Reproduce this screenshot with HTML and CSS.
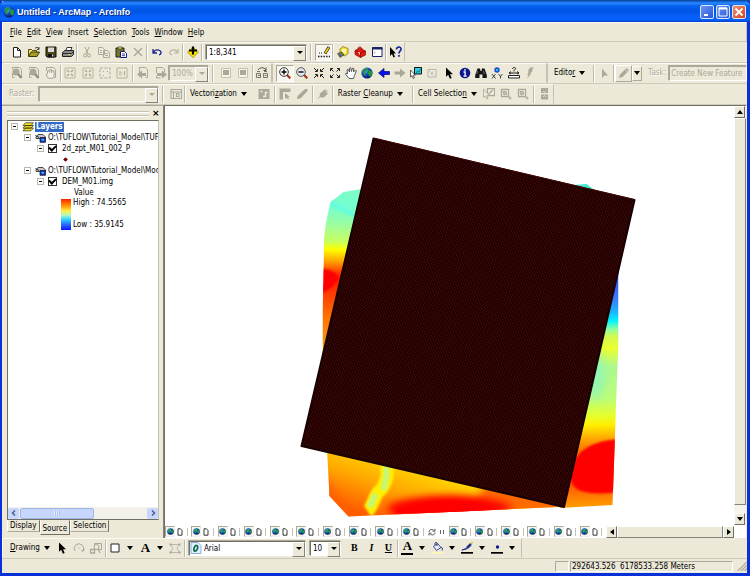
FILE: index.html
```html
<!DOCTYPE html>
<html lang="en">
<head>
<meta charset="utf-8">
<title>Untitled - ArcMap - ArcInfo</title>
<link rel="stylesheet" href="styles.css">
</head>
<body>
<svg class="sprite" aria-hidden="true">
  <defs>
    <radialGradient id="ball" cx=".35" cy=".3" r=".8"><stop offset="0" stop-color="#7fd0ff"/><stop offset=".4" stop-color="#1a4fd0"/><stop offset="1" stop-color="#000a50"/></radialGradient>
  </defs>
  <symbol id="globe" viewBox="0 0 12 12"><circle cx="6" cy="6" r="5.6" fill="url(#ball)"/><path d="M2 3 5 1 7 2 6 4 4 5 5 7 4 9 2 7zM8 3l3 1v4L9 10 7 7z" fill="#1f9a35"/></symbol>
  <symbol id="new" viewBox="0 0 12 12"><path d="M2.500 1.500h4l3 3v6.500h-7zM6.500 1.500v3h3" fill="#fff" stroke="#222"/></symbol>
  <symbol id="open" viewBox="0 0 12 12"><path d="M.5 10V3.500h3l1 1h4V6" fill="#f3e56b" stroke="#4b4a12"/><path d="M.5 10.500 3 6h8.500L9 10.500z" fill="#a89d22" stroke="#3c3a08"/><path d="M7 2.500c1-1.500 3-1.500 4 .5M11 1v2.500H8.800" fill="none" stroke="#222" stroke-width=".8"/></symbol>
  <symbol id="save" viewBox="0 0 12 12"><path d="M1 1h10v10H2L1 10z" fill="#4c4a14" stroke="#111"/><path d="M3 1.500h6V6H3z" fill="#d9d9d9"/><path d="M3 8h6v3.500H3z" fill="#111"/><path d="M7 8.500h1.300v2H7z" fill="#eee"/></symbol>
  <symbol id="print" viewBox="0 0 12 12"><path d="M3.500 5 5 1.500h5L8.500 5" fill="#fff" stroke="#333"/><path d="M.500 6.500 3 4.500h8.500v4L9.500 10.500h-9z" fill="#8d8d8d" stroke="#222"/><path d="M1 7.500h8.500M9.500 7.500l2-2" stroke="#333"/><path d="M6 8.500h2" stroke="#e6d836"/></symbol>
  <symbol id="cut" viewBox="0 0 12 12"><path d="M4 1l3 7M8 1 5 8" fill="none" stroke="#aca899"/><circle cx="4" cy="9.500" r="1.500" fill="none" stroke="#aca899"/><circle cx="8" cy="9.500" r="1.500" fill="none" stroke="#aca899"/></symbol>
  <symbol id="copy" viewBox="0 0 12 12"><path d="M.500 1.500h4l2 2v5h-6z M5.500 4.500h4l2 2v5h-6z M7 7.500h3M7 9.500h3M2 4.500h2M2 6.500h2" fill="#efecdf" stroke="#aca899"/></symbol>
  <symbol id="paste" viewBox="0 0 12 12"><path d="M1 2h8v9H1z" fill="#77742a" stroke="#222"/><path d="M3 1h4v2H3z" fill="#e8df70" stroke="#222" stroke-width=".6"/><path d="M5.500 5.500h4l2 2v4h-6z" fill="#fff" stroke="#14187c"/><path d="M7 8h3M7 9.700h3" stroke="#14187c" stroke-width=".8"/></symbol>
  <symbol id="del" viewBox="0 0 12 12"><path d="M2 2l8 8M10 2 2 10" stroke="#aca899" stroke-width="1.400"/></symbol>
  <symbol id="undo" viewBox="0 0 12 12"><path d="M2 3v4h4M2.500 6.500C4 3 9 3 10 6c.4 1.500-.5 2.500-2 3" fill="none" stroke="#1c2390" stroke-width="1.300"/></symbol>
  <symbol id="redo" viewBox="0 0 12 12"><path d="M10 3v4H6M9.500 6.500C8 3 3 3 2 6c-.4 1.500.5 2.500 2 3" fill="none" stroke="#bbb7a7" stroke-width="1.200"/></symbol>
  <symbol id="add" viewBox="0 0 12 12"><path d="M.500 6 6 1l5.500 5L6 11.700z" fill="#ffe600" stroke="#8a7a00" stroke-width=".7"/><path d="M6 .5v8M2 4.500h8" stroke="#000" stroke-width="2.200"/></symbol>
  <symbol id="sketch" viewBox="0 0 12 12"><path d="M0 10.500h12" stroke="#222" stroke-width="1.500" stroke-dasharray="1.500 1.200"/><path d="M1 7h4" stroke="#222" stroke-dasharray="1 1"/><path d="M7 7.500 11 1" stroke="#222" stroke-width="3"/><path d="M7.300 7 10.800 1.500" stroke="#ffd500" stroke-width="1.600"/></symbol>
  <symbol id="catalog" viewBox="0 0 12 12"><path d="M3 3 6 .5l5 2v5L8 10 3 8z" fill="#f3e12f" stroke="#7a6a10" stroke-width=".7"/><path d="M5 3h4v4H5z" fill="#fff8b0"/><path d="M.500 7.500 5 6l2 3-4 2.500z" fill="#8a8420" stroke="#333" stroke-width=".6"/><circle cx="3.500" cy="9" r="1.200" fill="#3560d0"/></symbol>
  <symbol id="toolbox" viewBox="0 0 12 12"><path d="M1 4.500 6 2l5.500 3v4L6.500 11.500 1 8.500z" fill="#e01c10" stroke="#8a0a05" stroke-width=".7"/><path d="M1 4.500 6.500 7 11.500 5M6.500 7v4.500" fill="none" stroke="#900" stroke-width=".8"/><path d="M4 3c0-3 4-2.500 4 .5" fill="none" stroke="#a00"/><path d="M4 6.500h1.500v2" stroke="#fff" fill="none" stroke-width=".8"/></symbol>
  <symbol id="cmd" viewBox="0 0 12 12"><path d="M1.500 1.500h9.500v9H1.500z" fill="#fff" stroke="#1b2367"/><path d="M1 2.500h10.500" stroke="#1b2367" stroke-width="2"/><path d="M3 5.500l1 1-1 1" stroke="#444" fill="none" stroke-width=".6"/></symbol>
  <symbol id="help" viewBox="0 0 12 12"><path d="M0 1v9l2-2 1.500 3.500 1.500-.7L3.500 7.500H6z" fill="#000"/><path d="M6.500 3.500C6.500 0 11.500.5 11 3.500 10.800 5 9 5 9 7.500M9 9v1.800" fill="none" stroke="#13209a" stroke-width="1.600"/></symbol>
  <symbol id="gpage" viewBox="0 0 12 12"><path d="M1.500 2.500V.5h7l2 2v8h-2M1.500 6v4.500h2" fill="none" stroke="#aca899"/><circle cx="5" cy="5" r="3.500" fill="#aca899"/><path d="m7 7 3.500 4" stroke="#8f8b7d" stroke-width="2"/></symbol>
  <symbol id="gpan" viewBox="0 0 12 12"><path d="M1.500 4V.5h7l2 2v8h-2" fill="none" stroke="#aca899"/><path d="M3 11 1 7.500 2.500 7 2.500 4l1.500-.5.500 2 .5-3 1.500.2V6l1-2.500L9 4v5l-1.500 2.500z" fill="#f4f2e8" stroke="#aca899"/></symbol>
  <symbol id="gfix" viewBox="0 0 12 12"><path d="M1 1h10v10H1z" fill="none" stroke="#bbb7a8"/><path d="M3 3l2 2M9 3 7 5M3 9l2-2M9 9 7 7" stroke="#aca899" stroke-width="1.500"/></symbol>
  <symbol id="gwhole" viewBox="0 0 12 12"><path d="M1 1h10v10H1z" fill="none" stroke="#aca899" stroke-dasharray="3 1.500"/><path d="M4 4h1v1H4zM8 4h1v1H8zM4 8h1v1H4z" fill="#aca899"/></symbol>
  <symbol id="gone" viewBox="0 0 12 12"><path d="M1 1h10v10H1z" fill="none" stroke="#b5b1a2"/><path d="M4 4v4.500M8.500 4v4.500M6 5v.8M6 7.500v.8" stroke="#aca899"/></symbol>
  <symbol id="gback" viewBox="0 0 12 12"><path d="M2.500 6V.5h6l2 2v8h-2" fill="none" stroke="#aca899"/><path d="M0 7.500 5 3.500V6h4v3H5v2.500z" fill="#aca899"/></symbol>
  <symbol id="gfwd" viewBox="0 0 12 12"><path d="M1.500 6V.5h6l2 2V5M1.500 9v2h4" fill="none" stroke="#aca899"/><path d="M12 7.500 7 3.500V6H2v3h5v2.500z" fill="#aca899"/></symbol>
  <symbol id="gframe" viewBox="0 0 12 12"><path d="M1.500 1.500h9v9h-9z" fill="#f6f4ea" stroke="#c4c0b2"/><path d="M3 3h6v5H3z" fill="#aca899"/></symbol>
  <symbol id="ddp" viewBox="0 0 12 12"><path d="M.500 6.500h4v4h-4zM7.500 6.500h4v4h-4zM1 4.500h3M8 4.500h3" fill="none" stroke="#77756b"/><path d="M2 8.500h2M8.500 8.500h2" stroke="#77756b"/><path d="M2 3c2-3 6-3 8 0M10 .5V3.500H7.500" fill="none" stroke="#444" stroke-width=".9"/></symbol>
  <symbol id="zin" viewBox="0 0 12 12"><path d="m8 8 3.300 3.300" stroke="#a03018" stroke-width="2.200"/><circle cx="5" cy="5" r="4.300" fill="#fff" stroke="#333"/><path d="M2.500 5h5M5 2.500v5" stroke="#000" stroke-width="1.400"/></symbol>
  <symbol id="zout" viewBox="0 0 12 12"><path d="m8 8 3.300 3.300" stroke="#a03018" stroke-width="2.200"/><circle cx="5" cy="5" r="4.300" fill="#e4e8f0" stroke="#555"/><path d="M2.500 5h5" stroke="#000" stroke-width="1.400"/></symbol>
  <symbol id="fixin" viewBox="0 0 12 12"><path d="M1 1l3 3M11 1 8 4M1 11l3-3M11 11 8 8M4.500 2v2.500H2M7.500 2v2.500H10M4.500 10V7.500H2M7.500 10V7.500H10" fill="none" stroke="#222"/></symbol>
  <symbol id="fixout" viewBox="0 0 12 12"><path d="M2 2l2.500 2.500M10 2 7.500 4.500M2 10l2.500-2.500M10 10 7.500 7.500M4 1.500H1.500V4M8 1.500h2.500V4M4 10.500H1.500V8M8 10.500h2.500V8" fill="none" stroke="#222"/></symbol>
  <symbol id="hand" viewBox="0 0 12 12"><path d="M4 11.500 .8 7.500 1 6l1.500.8L2 3l1-.8L4.500 5 4.500 1.200 5.800.8 6.500 4.500 7.500 1.200 8.800 1.500 8.500 5 10.500 3l.8 1L9.500 8.500 8.500 11.500z" fill="#fff" stroke="#333" stroke-width=".8"/></symbol>
  <symbol id="left" viewBox="0 0 12 12"><path d="M.500 6 6 1.500V4.500h5.500v3H6v3z" fill="#0a10ee" stroke="#000a60" stroke-width=".7"/></symbol>
  <symbol id="right" viewBox="0 0 12 12"><path d="M11.500 6 6 1.500V4.500H.500v3H6v3z" fill="#aca899"/></symbol>
  <symbol id="selfeat" viewBox="0 0 12 12"><path d="M4.500 .5h7v6.500h-7z" fill="#25d7e8" stroke="#111"/><path d="M6 6.500 7.500 3.500l1.500 2L10.500 2" fill="none" stroke="#157a90"/><path d="M.500 3v7l1.500-1.300L3.200 11.500l1.200-.6L3.300 8.200h2z" fill="#fff" stroke="#222" stroke-width=".7"/></symbol>
  <symbol id="gclear" viewBox="0 0 12 12"><path d="M2 2.500h8v7.500H2z" fill="#f0eee2" stroke="#b8b4a6"/><path d="M3 3.500l5 5M7 4.500 5 8" stroke="#b8b4a6"/></symbol>
  <symbol id="arrow" viewBox="0 0 12 12"><path d="M3 .5v9.300l2.200-2 1.700 3.900 1.800-.8-1.700-3.600H10z" fill="#000"/></symbol>
  <symbol id="info" viewBox="0 0 12 12"><circle cx="6" cy="6" r="5.300" fill="#0d168c"/><path d="M6 2v1.800M4.500 5h1.600v4M4.500 9.200h3.200" stroke="#fff" stroke-width="1.300" fill="none"/></symbol>
  <symbol id="find" viewBox="0 0 12 12"><path d="M2.500 1.500H5L5.500 4h1L7 1.500h2.500L11.800 8v3H7.500V7.500h-3V11H.2V8z" fill="#151515"/><path d="M2.500 4 1.800 7M8.500 4l.8 3" stroke="#999" stroke-width=".7"/></symbol>
  <symbol id="xy" viewBox="0 0 12 12"><circle cx="6" cy="3" r="2.700" fill="#1947d8"/><circle cx="6" cy="3" r="1.200" fill="#23c4e8"/><path d="m1 7 3.500 4.500M4.500 7 1 11.500M7.500 7l2 2.300L11.500 7M9.500 9v2.500" fill="none" stroke="#333" stroke-width=".9"/></symbol>
  <symbol id="measure" viewBox="0 0 12 12"><path d="M.500 8.500h11v2.500H.500z" fill="#fff" stroke="#222"/><path d="M1 6h10M3 4.500 1 6l2 1M9 4.500 11 6 9 7" fill="none" stroke="#222"/><path d="M4.500 2C4.500 0 8 0 7.500 2L6 3.500v1" fill="none" stroke="#222"/></symbol>
  <symbol id="bolt" viewBox="0 0 12 12"><path d="M6 .5h4L7.500 3.500H9L6 6.500h1.500L3 11.500 4.500 7.500H3L5 4.500H3.500z" fill="#aca899"/></symbol>
  <symbol id="play" viewBox="0 0 12 12"><path d="M3 1.500v9.500l2.500-2.500H9z" fill="#aca899"/></symbol>
  <symbol id="pencil" viewBox="0 0 12 12"><path d="M1 11 2 7.500 8.500 1l2.500 2.500L4.500 10z" fill="#aca899"/><path d="m7 2.500 2.500 2.500" stroke="#ece9d8" stroke-width=".8"/></symbol>
  <symbol id="gtable" viewBox="0 0 12 12"><path d="M1 1.500h10.500v9H1zM1 4h10.500M3.500 4v6.500M6.500 5.500H9v3H6.500z" fill="none" stroke="#aca899" stroke-width="1.100"/></symbol>
  <symbol id="gras" viewBox="0 0 12 12"><path d="M.500 1h11v10H.500z" fill="#aca899"/><path d="M2.500 3.500h2M5 8.500h2.500v-4h2" fill="none" stroke="#efecdf" stroke-width="1.500"/></symbol>
  <symbol id="gcorner" viewBox="0 0 12 12"><path d="M.500.5h11V4H4v7.500H.500z" fill="#aca899"/><path d="M6 5v6l1.500-1.500L9 11.500l1-.5-1-2h2z" fill="#aca899"/></symbol>
  <symbol id="gbrush" viewBox="0 0 12 12"><path d="M1 11 1.500 8 9 1h2.500v2L4.500 10.500z" fill="#aca899"/></symbol>
  <symbol id="gplug" viewBox="0 0 12 12"><path d="M0 11 3 8 2.500 6 6 3 9 .5 8 3l3-1L9 5h2.500L8 8.500 5.500 10 4 9z" fill="#aca899"/></symbol>
  <symbol id="gcell" viewBox="0 0 12 12"><path d="M1.500 1.500h7v7h-7z" fill="#f3f1e6" stroke="#aca899" stroke-width="1.300"/><path d="M3 3.500 6 3.500 7 6 4 7zM10 8.500v3M8.500 10h3" stroke="#aca899" fill="#c4c0b2"/></symbol>
  <symbol id="gcellsel" viewBox="0 0 12 12"><path d="M4.500.5h7v7h-7z" fill="#f3f1e6" stroke="#aca899" stroke-width="1.300"/><path d="M6 6 9.500 2" stroke="#aca899" stroke-width="1.500"/><path d="M.500 1v8.500L2.500 8l1.200 3 1.300-.5L4 7.500h2.500z" fill="#ece9d8" stroke="#aca899" stroke-width=".8"/></symbol>
  <symbol id="gstack" viewBox="0 0 12 12"><path d="M3 0h7v5H3zM3 6.500h7v5H3z" fill="#aca899"/><path d="M5 3l1.500 1.500L8 3M5 9l1.500-1.500L8 9" stroke="#efecdf" fill="none" stroke-width=".8"/></symbol>
  <symbol id="grot" viewBox="0 0 12 12"><path d="M2 9A4.700 4.700 0 1 1 10 9M11.500 7 10 9.500 8 8" fill="none" stroke="#aca899"/><path d="M5.500 5.500h1v1h-1z" fill="#aca899"/></symbol>
  <symbol id="gzsel" viewBox="0 0 12 12"><path d="M4.500 1.500h7v6h-7z" fill="none" stroke="#aca899"/><circle cx="6.500" cy="5" r="2.500" fill="#ece9d8" stroke="#aca899"/><path d="M.500 7.500h4v3.500h-4zM8 7l2 4" fill="none" stroke="#aca899" stroke-width="1.300"/></symbol>
  <symbol id="rect" viewBox="0 0 12 12"><path d="M2 2h8v8H2z" fill="#fff" stroke="#222"/></symbol>
  <symbol id="gpoly" viewBox="0 0 12 12"><path d="M1.500 10.500 4 6.500 1.500 2.500h9L8 6l2.500 4.500z" fill="none" stroke="#bbb7a8"/><path d="M.500 1.500h2v2h-2zM9.500 1.500h2v2h-2zM.500 9.500h2v2h-2zM9.500 9.500h2v2h-2z" fill="#aca899"/></symbol>
  <symbol id="bucket" viewBox="0 0 12 12"><path d="M0 10h12v1.500H0z" fill="#fdf9b0"/><path d="m2.500 4.500 4-3 3.500 4-4.500 3z" fill="#e6ebfa" stroke="#2a3480" stroke-width=".9"/><path d="M4 3V1.500c0-1.500 2-1.500 2 0V4M10 5c2 1 1.500 3 1 3.500" fill="none" stroke="#2a3480"/></symbol>
  <symbol id="linecol" viewBox="0 0 12 12"><path d="M0 10h12v1.700H0z" fill="#000"/><path d="M6 6 10 2" stroke="#23308c" stroke-width="2.500"/><path d="M10 2 11.500 0" stroke="#d8c530" stroke-width="1.500"/><path d="M1 8.500c1-2 3 0 5-2.500" fill="none" stroke="#23308c" stroke-width="1.300"/></symbol>
  <symbol id="dotcol" viewBox="0 0 12 12"><path d="M0 10h12v1.700H0z" fill="#000"/><circle cx="6.500" cy="5" r="1.700" fill="#101b96"/></symbol>
  <symbol id="page" viewBox="0 0 6 8"><path d="M1 .8h2.500L5 2.500v4.700H1z" fill="#fff" stroke="#222" stroke-width=".9"/></symbol>
  <symbol id="refresh" viewBox="0 0 8 8"><path d="M1 4c0-3 4-3 5-1.500M7 .8v2.400H4.500M7 4.500c0 3-4 3-5 1.200M1 7.500V5.200h2.500" fill="none" stroke="#444" stroke-width=".9"/></symbol>
  <symbol id="layers" viewBox="0 0 12 10"><path d="M1 8.800 3.500 6h8L9 8.800zM1 6.200 3.500 3.500h8L9 6.200zM1 3.600 3.500.8h8L9 3.600z" fill="#f5e432" stroke="#2d2a00" stroke-width=".7"/></symbol>
  <symbol id="source" viewBox="0 0 12 10"><path d="M1 4 3 1.500h5L10.500 4v1.500H1z" fill="#c9c9c9" stroke="#222" stroke-width=".8"/><path d="M.500 2.500 4 4.500" stroke="#222"/><path d="M5 4.500h5.500v4.800H5z" fill="#1a2fc0" stroke="#111" stroke-width=".7"/><path d="M6.500 6h2.500v1.500H6.500z" fill="#3fd0e8"/></symbol>
  <symbol id="fontic" viewBox="0 0 12 12"><path d="M1 .5h7L11 3.500V11.500H1z" fill="#e4f0ff" stroke="#6f9bd8" stroke-width=".8"/><ellipse cx="5.800" cy="6.300" rx="1.700" ry="3" transform="rotate(18 5.800 6.300)" fill="none" stroke="#0a6a50" stroke-width="1.700"/></symbol>
</svg>

<div class="window">
  <header class="titlebar">
    <svg class="i"><use href="#globe"/></svg>
    <h1>Untitled - ArcMap - ArcInfo</h1>
    <button class="wb" aria-label="Minimize"><svg viewBox="0 0 12 12"><path d="M3 9h4" stroke="#fff" stroke-width="2"/></svg></button>
    <button class="wb" aria-label="Maximize"><svg viewBox="0 0 12 12"><path d="M2 2h8v8H2z" fill="none" stroke="#fff"/><path d="M2 2.500h8" stroke="#fff" stroke-width="2"/></svg></button>
    <button class="wb close" aria-label="Close"><svg viewBox="0 0 12 12"><path d="m2.500 2.500 7 7M9.500 2.500l-7 7" stroke="#fff" stroke-width="1.800"/></svg></button>
  </header>

  <nav class="menu bar">
    <button><u>F</u>ile</button><button><u>E</u>dit</button><button><u>V</u>iew</button><button><u>I</u>nsert</button><button><u>S</u>election</button><button><u>T</u>ools</button><button><u>W</u>indow</button><button><u>H</u>elp</button>
  </nav>

  <div class="row">
    <div class="bar std">
      <button class="t" aria-label="New"><svg class="i"><use href="#new"/></svg></button><button class="t" aria-label="Open"><svg class="i"><use href="#open"/></svg></button><button class="t" aria-label="Save"><svg class="i"><use href="#save"/></svg></button><button class="t" aria-label="Print"><svg class="i"><use href="#print"/></svg></button>
      <i class="sep"></i>
      <button class="t" aria-label="Cut"><svg class="i"><use href="#cut"/></svg></button><button class="t" aria-label="Copy"><svg class="i"><use href="#copy"/></svg></button><button class="t" aria-label="Paste"><svg class="i"><use href="#paste"/></svg></button><button class="t" aria-label="Delete"><svg class="i"><use href="#del"/></svg></button>
      <i class="sep"></i>
      <button class="t" aria-label="Undo"><svg class="i"><use href="#undo"/></svg></button><button class="t" aria-label="Redo"><svg class="i"><use href="#redo"/></svg></button>
      <i class="sep"></i>
      <button class="t" aria-label="Add Data"><svg class="i"><use href="#add"/></svg></button>
      <i class="sep"></i>
      <div class="combo scale"><select aria-label="Map scale"><option>1:8,341</option></select></div>
      <i class="sep wide"></i>
      <button class="t on" aria-label="Editor Toolbar"><svg class="i"><use href="#sketch"/></svg></button>
      <i class="sep"></i>
      <button class="t" aria-label="ArcCatalog"><svg class="i"><use href="#catalog"/></svg></button><button class="t" aria-label="ArcToolbox"><svg class="i"><use href="#toolbox"/></svg></button><button class="t" aria-label="Command Line"><svg class="i"><use href="#cmd"/></svg></button>
      <i class="sep"></i>
      <button class="t" aria-label="What's This?"><svg class="i"><use href="#help"/></svg></button>
    </div>
  </div>

  <div class="row">
    <div class="bar layout">
      <button class="t" disabled aria-label="Zoom In Layout"><svg class="i"><use href="#gpage"/></svg></button><button class="t" disabled aria-label="Zoom Out Layout"><svg class="i"><use href="#gpage"/></svg></button><button class="t" disabled aria-label="Pan Layout"><svg class="i"><use href="#gpan"/></svg></button>
      <i class="sep"></i>
      <button class="t" disabled aria-label="Fixed Zoom In"><svg class="i"><use href="#gfix"/></svg></button><button class="t" disabled aria-label="Fixed Zoom Out"><svg class="i"><use href="#gfix"/></svg></button><button class="t" disabled aria-label="Zoom Whole Page"><svg class="i"><use href="#gwhole"/></svg></button><button class="t" disabled aria-label="Zoom to 100%"><svg class="i"><use href="#gone"/></svg></button>
      <i class="sep mid"></i>
      <button class="t" disabled aria-label="Back Extent"><svg class="i"><use href="#gback"/></svg></button><button class="t" disabled aria-label="Forward Extent"><svg class="i"><use href="#gfwd"/></svg></button>
      <div class="combo zoom off"><select disabled aria-label="Layout zoom"><option>100%</option></select></div>
      <i class="sep wide"></i>
      <button class="t" disabled aria-label="Toggle Draft"><svg class="i"><use href="#gframe"/></svg></button><button class="t" disabled aria-label="Focus Data Frame"><svg class="i"><use href="#gframe"/></svg></button>
      <i class="sep"></i>
      <button class="t" aria-label="Data Driven Pages"><svg class="i"><use href="#ddp"/></svg></button>
    </div>
    <div class="bar tools">
      <button class="t on" aria-label="Zoom In"><svg class="i"><use href="#zin"/></svg></button><button class="t" aria-label="Zoom Out"><svg class="i"><use href="#zout"/></svg></button><button class="t" aria-label="Fixed Zoom In"><svg class="i"><use href="#fixin"/></svg></button><button class="t" aria-label="Fixed Zoom Out"><svg class="i"><use href="#fixout"/></svg></button><button class="t" aria-label="Pan"><svg class="i"><use href="#hand"/></svg></button><button class="t" aria-label="Full Extent"><svg class="i"><use href="#globe"/></svg></button><button class="t" aria-label="Back"><svg class="i"><use href="#left"/></svg></button><button class="t" disabled aria-label="Forward"><svg class="i"><use href="#right"/></svg></button><button class="t" aria-label="Select Features"><svg class="i"><use href="#selfeat"/></svg></button><button class="t" disabled aria-label="Clear Selection"><svg class="i"><use href="#gclear"/></svg></button><button class="t" aria-label="Select Elements"><svg class="i"><use href="#arrow"/></svg></button><button class="t" aria-label="Identify"><svg class="i"><use href="#info"/></svg></button><button class="t" aria-label="Find"><svg class="i"><use href="#find"/></svg></button><button class="t" aria-label="Go To XY"><svg class="i"><use href="#xy"/></svg></button><button class="t" aria-label="Measure"><svg class="i"><use href="#measure"/></svg></button><button class="t" disabled aria-label="Hyperlink"><svg class="i"><use href="#bolt"/></svg></button>
    </div>
    <div class="bar editor">
      <button class="text"><span>Edito<u>r</u></span><b class="tri"></b></button>
      <i class="sep mid"></i>
      <button class="t" disabled aria-label="Edit Tool"><svg class="i"><use href="#play"/></svg></button>
      <i class="sep"></i>
      <button class="t raised" disabled aria-label="Sketch Tool"><svg class="i"><use href="#pencil"/></svg></button><button class="drop raised" aria-label="Sketch tools"><b class="tri"></b></button>
      <label class="gray" for="task">Task:</label>
      <div class="combo task off"><select id="task" disabled><option>Create New Feature</option></select></div>
    </div>
  </div>

  <div class="row">
    <div class="bar raster">
      <label class="gray" for="rast">Raster:</label>
      <div class="combo rast off"><select id="rast" disabled><option></option></select></div>
      <i class="sep wide"></i>
      <button class="t" disabled aria-label="Raster Snapping"><svg class="i"><use href="#gtable"/></svg></button>
      <i class="sep"></i>
      <button class="text vec"><span>Vectori<u>z</u>ation</span><b class="tri"></b></button>
      <button class="t" disabled aria-label="Show Preview"><svg class="i"><use href="#gras"/></svg></button>
      <i class="sep mid"></i>
      <button class="t" disabled aria-label="Generate Features"><svg class="i"><use href="#gcorner"/></svg></button><button class="t" disabled aria-label="Trace"><svg class="i"><use href="#gbrush"/></svg></button>
      <i class="sep mid"></i>
      <button class="t" disabled aria-label="Shape Recognition"><svg class="i"><use href="#gplug"/></svg></button>
      <i class="sep"></i>
      <button class="text clean"><span>Raster <u>C</u>leanup</span><b class="tri"></b></button>
      <i class="sep"></i>
      <button class="text cell"><span>Cell Selectio<u>n</u></span><b class="tri"></b></button>
      <button class="t" disabled aria-label="Select Cells"><svg class="i"><use href="#gcellsel"/></svg></button><button class="t" disabled aria-label="Add Cells"><svg class="i"><use href="#gcell"/></svg></button><button class="t" disabled aria-label="Grow Cells"><svg class="i"><use href="#gcell"/></svg></button>
      <i class="sep mid"></i>
      <button class="t" disabled aria-label="Find Diameter"><svg class="i"><use href="#gstack"/></svg></button>
    </div>
  </div>

  <main>
    <aside>
      <div class="dock"><span></span><button aria-label="Close panel">×</button></div>
      <div class="toc">
        <ul class="tree">
          <li class="l0"><i class="exp"></i><svg class="ti"><use href="#layers"/></svg><strong>Layers</strong></li>
          <li class="l1"><i class="exp"></i><svg class="ti"><use href="#source"/></svg>O:\TUFLOW\Tutorial_Model\TUF</li>
          <li class="l2"><i class="exp"></i><input type="checkbox" id="a" checked><label for="a">2d_zpt_M01_002_P</label></li>
          <li class="sym"><i class="diamond"></i></li>
          <li class="l1"><i class="exp"></i><svg class="ti"><use href="#source"/></svg>O:\TUFLOW\Tutorial_Model\Mod</li>
          <li class="l2"><i class="exp"></i><input type="checkbox" id="b" checked><label for="b">DEM_M01.img</label></li>
          <li class="val">Value</li>
          <li class="ramp"><i></i><p><span>High : 74.5565</span><span>Low : 35.9145</span></p></li>
        </ul>
        <div class="hxp"><button aria-label="Scroll left"><svg viewBox="0 0 6 6"><path d="M4 .5 1.500 3 4 5.500" fill="none" stroke="#4d6185" stroke-width="1.500"/></svg></button><i></i><button aria-label="Scroll right"><svg viewBox="0 0 6 6"><path d="M2 .5 4.500 3 2 5.500" fill="none" stroke="#4d6185" stroke-width="1.500"/></svg></button></div>
      </div>
      <div class="tabs"><button>Display</button><button class="cur">Source</button><button>Selection</button></div>
    </aside>

    <section class="view">
      <div class="upper">
        <svg class="map" viewBox="166 106 568 419" role="img" aria-label="Elevation raster and grid points">
          <defs>
            <linearGradient id="gl" gradientUnits="userSpaceOnUse" x1="330" y1="190" x2="324" y2="350">
              <stop offset="0" stop-color="#7dfcc6"/><stop offset=".1" stop-color="#72ffd0"/><stop offset=".22" stop-color="#9ffd9c"/><stop offset=".32" stop-color="#c8ff60"/><stop offset=".37" stop-color="#fcff00"/><stop offset=".44" stop-color="#ffa800"/><stop offset=".5" stop-color="#ff4c00"/><stop offset=".54" stop-color="#ff1a00"/><stop offset=".66" stop-color="#ff4000"/><stop offset=".8" stop-color="#ff7400"/><stop offset="1" stop-color="#ff9a10"/>
            </linearGradient>
            <linearGradient id="gr" gradientUnits="userSpaceOnUse" x1="600" y1="270" x2="606" y2="508">
              <stop offset="0" stop-color="#2b3cff"/><stop offset=".12" stop-color="#3a78ff"/><stop offset=".18" stop-color="#18b8ff"/><stop offset=".215" stop-color="#00f4ff"/><stop offset=".25" stop-color="#90ffa0"/><stop offset=".28" stop-color="#d2f850"/><stop offset=".33" stop-color="#ecff30"/><stop offset=".41" stop-color="#acf890"/><stop offset=".54" stop-color="#bcfd78"/><stop offset=".61" stop-color="#e4ff30"/><stop offset=".65" stop-color="#fff000"/><stop offset=".7" stop-color="#ffb000"/><stop offset=".76" stop-color="#ff6c00"/><stop offset=".9" stop-color="#ff5800"/><stop offset="1" stop-color="#ffa200"/>
            </linearGradient>
            <linearGradient id="gb" gradientUnits="userSpaceOnUse" x1="385" y1="455" x2="365" y2="515">
              <stop offset="0" stop-color="#ffd800"/><stop offset=".45" stop-color="#ffa800"/><stop offset="1" stop-color="#ff5a00"/>
            </linearGradient>
            <filter id="b1" x="-50%" y="-50%" width="200%" height="200%"><feGaussianBlur stdDeviation="1.200"/></filter>
            <filter id="b4" x="-50%" y="-80%" width="200%" height="260%"><feGaussianBlur stdDeviation="4"/></filter>
            <clipPath id="cb"><path d="M327 440 330 496 349 516.500 613 504.500 613 440z"/></clipPath>
            <clipPath id="cr"><path d="M619 265 619 340 616.500 405 615 450 613 505 560 508 540 380z"/></clipPath>
            <clipPath id="cl"><path d="M400 180 362 189 344 192 331 202 327 220 324.500 238 324 280 323 310 323 420 400 420z"/></clipPath>
            <pattern id="pts" width="3" height="4" patternUnits="userSpaceOnUse" patternTransform="rotate(13.300)">
              <path d="M0 0h3v4H0z" fill="#0c0000"/><path d="M.3.500h1.200v1.400H.3zM1.800 2.500h1.100v1.400H1.800z" fill="#740a0a"/>
            </pattern>
          </defs>
          <g clip-path="url(#cl)"><path d="M320 180h80v240h-80z" fill="url(#gl)"/><path d="m331 203 25 13" stroke="#63fbe0" stroke-width="4" filter="url(#b1)"/><path d="M320 268q18 3 19 10-3 10-19 16z" fill="#f00" filter="url(#b1)"/></g>
          <path d="m574 185 13-1 8 6z" fill="#43e9cc"/>
          <g clip-path="url(#cb)">
            <path d="M320 430h250v90H320z" fill="url(#gb)"/>
            <path d="M500 455h70v60h-100z" fill="#ff6a00" filter="url(#b4)"/>
            <path d="M320 470 355 520H320z" fill="#ff6000" filter="url(#b4)"/>
            <ellipse cx="450" cy="508" rx="62" ry="11" fill="#f00" filter="url(#b4)"/><path d="M390 510q60-22 105-4l-10 8h-92z" fill="#f00" filter="url(#b4)"/><path d="M398 509q50-15 85-4l-6 8h-82z" fill="#f00" filter="url(#b1)"/>
            <path d="M387 460c1 14 2 18-5 29-8 5-8 18-14 22" fill="none" stroke="#fff000" stroke-width="13" filter="url(#b1)"/>
            <path d="M387 466v8l-3 16M376 494l-6 13" fill="none" stroke="#c4f77a" stroke-width="6" filter="url(#b1)"/>
          </g>
          <g clip-path="url(#cr)">
            <path d="M540 260h90v250h-90z" fill="url(#gr)"/>
            <ellipse cx="596" cy="375" rx="9" ry="24" fill="#8df5bc" filter="url(#b4)" opacity=".8"/>
            <path d="M571 480q-1-38 50-41v52q-20 5-40 0-8-4-10-11z" fill="#f00" filter="url(#b1)"/>
          </g>
          <path d="M374 138.500 635 200 564.500 507 302 446z" fill="url(#pts)" stroke="#180202" stroke-width="2" stroke-linejoin="round"/>
          <path d="M375 138.500 634 199.500" stroke="#4c0606"/>
        </svg>
        <div class="vs"><button aria-label="Scroll up"><b class="tri up"></b></button><i></i><button aria-label="Scroll down"><b class="tri"></b></button></div>
      </div>
      <div class="strip">
        <div class="pages" id="pages"></div>
        <button aria-label="Scroll left"><b class="tri lf"></b></button><i></i><button aria-label="Scroll right"><b class="tri rt"></b></button><em></em>
      </div>
    </section>
  </main>

  <div class="row">
    <div class="bar draw">
      <button class="text dr"><span><u>D</u>rawing</span><b class="tri"></b></button>
      <button class="t" aria-label="Select Elements"><svg class="i"><use href="#arrow"/></svg></button><button class="t" disabled aria-label="Rotate"><svg class="i"><use href="#grot"/></svg></button><button class="t" disabled aria-label="Zoom to Selected"><svg class="i"><use href="#gzsel"/></svg></button>
      <i class="sep"></i>
      <button class="t" aria-label="Rectangle"><svg class="i"><use href="#rect"/></svg></button><button class="drop" aria-label="Shapes"><b class="tri"></b></button>
      <button class="t glyph big" aria-label="New Text">A</button><button class="drop" aria-label="Text tools"><b class="tri"></b></button>
      <button class="t" disabled aria-label="Edit Vertices"><svg class="i"><use href="#gpoly"/></svg></button>
      <i class="sep"></i>
      <div class="combo font"><svg class="i"><use href="#fontic"/></svg><select aria-label="Font"><option>Arial</option></select></div>
      <div class="combo size"><select aria-label="Font size"><option>10</option></select></div>
      <button class="t glyph">B</button><button class="t glyph it">I</button><button class="t glyph un">U</button>
      <i class="sep"></i>
      <button class="t glyph col" aria-label="Font Color">A</button><button class="drop" aria-label="Font colors"><b class="tri"></b></button>
      <button class="t fc" aria-label="Fill Color"><svg class="i"><use href="#bucket"/></svg></button><button class="drop" aria-label="Fill colors"><b class="tri"></b></button>
      <button class="t fc" aria-label="Line Color"><svg class="i"><use href="#linecol"/></svg></button><button class="drop" aria-label="Line colors"><b class="tri"></b></button>
      <button class="t fc" aria-label="Marker Color"><svg class="i"><use href="#dotcol"/></svg></button><button class="drop" aria-label="Marker colors"><b class="tri"></b></button>
    </div>
  </div>
  <footer><span class="cellbox"></span><output>292643.526&nbsp; 6178533.258 Meters</output><svg viewBox="0 0 12 12"><path d="M1 12 12 1M5 12l7-7M9 12l3-3" stroke="#aca899" stroke-width="1.500"/></svg></footer>
</div>
<script src="script.js"></script>
</body>
</html>
```

FILE: script.js
```js
// Fills the view switcher strip: data/layout view pairs with the refresh and pause controls among them.
const pages = document.getElementById('pages');
const pair = '<div class="pair"><button class="data" aria-label="Data View"><svg><use href="#globe"/></svg></button><button class="lay" aria-label="Layout View"><svg><use href="#page"/></svg></button><i></i></div>';
const extra = '<div class="extra"><button aria-label="Refresh View"><svg><use href="#refresh"/></svg></button><button aria-label="Pause Drawing"><b></b></button></div>';
pages.innerHTML = pair.repeat(10) + extra + pair.repeat(6);
```

FILE: styles.css
```css
* { box-sizing: border-box; }
html, body { height: 100%; margin: 0; }
body {
  background: #0b4d9e;
  padding-top: 1px;
  font: 8px/10px "DejaVu Sans Condensed", "DejaVu Sans", sans-serif;
  color: #000;
  overflow: hidden;
}
button, select, input { font: inherit; color: inherit; margin: 0; padding: 0; border: 0; background: none; border-radius: 0; }
ul, p, h1 { margin: 0; padding: 0; }
li { list-style: none; }
u { text-underline-offset: 1px; }
.sprite { position: absolute; width: 0; height: 0; }
.window {
  height: 100%;
  display: flex;
  flex-direction: column;
  background: #ece9d8;
  border: solid #0831d9;
  border-width: 0 3px 3px 2px;
}
.i { width: 12px; height: 12px; flex: none; display: block; }

/* title bar */
.titlebar {
  flex: none;
  height: 21px;
  margin: 0 -3px 0 -2px;
  padding: 0 4px 0 3px;
  display: flex;
  align-items: center;
  gap: 2px;
  background: linear-gradient(#0a50c8, #2b8bff 2px, #0560ee 5px, #0054e3 10px, #0661fb 16px, #0660f8 19px, #003cc4);
  border-radius: 5px 5px 0 0;
}
.titlebar h1 { flex: 1; font: bold 9px/12px "Liberation Sans", sans-serif; color: #fff; text-shadow: 1px 1px #0a2a80; }
.wb { width: 14px; height: 14px; border: 1px solid #dce8ff; border-radius: 2px; background: linear-gradient(135deg, #6c95f4, #2458dc); display: grid; place-items: center; }
.wb svg { width: 12px; height: 12px; }
.wb.close { background: linear-gradient(135deg, #f0906c, #d8401c); }

/* toolbars */
.row { flex: none; display: flex; height: 21px; border-bottom: 1px solid #cfcbbb; overflow: hidden; }
.bar { display: flex; align-items: center; flex: none; padding-left: 5px; border: 1px solid; border-color: #fbfaf5 #c5c2b3 #ece9d8 #fbfaf5; }
.menu { height: 20px; gap: 5px; padding: 2px 0 0 7px; border-bottom-color: #cfcbbb; }
.t { width: 17px; height: 17px; flex: none; display: grid; place-items: center; }
.t.on { background: #f6f5ef; border: 1px solid; border-color: #aca899 #fff #fff #aca899; }
.raised { border: 1px solid; border-color: #fff #aca899 #aca899 #fff; }
.sep { width: 2px; height: 17px; flex: none; border-left: 1px solid #bdb9aa; border-right: 1px solid #fff; }
.sep.mid { margin: 0 1px; }
.sep.wide { margin: 0 3px; }
.text { display: flex; align-items: center; gap: 4px; padding: 0 4px; flex: none; }
.tri { width: 0; height: 0; border: solid transparent; border-width: 4px 3px 0; border-top-color: #000; }
.tri.up { border-width: 0 3px 4px; border-bottom-color: #000; }
.tri.lf { border-width: 3px 4px 3px 0; border-color: transparent #000; }
.tri.rt { border-width: 3px 0 3px 4px; border-color: transparent #000; }
.gray { color: #aca899; text-shadow: 1px 1px #fff; }
.drop { width: 10px; height: 15px; display: grid; place-items: center; flex: none; }

.combo { position: relative; height: 15px; flex: none; display: flex; align-items: center; background: #fff; border: 1px solid; border-color: #716f64 #fff #fff #716f64; box-shadow: -1px -1px #aca899; }
.combo select { appearance: none; flex: 1; min-width: 0; height: 13px; padding: 0 12px 0 2px; line-height: 13px; }
.combo::before { content: ""; position: absolute; right: 0; top: 0; width: 11px; height: 13px; background: #ece9d8; border: 1px solid; border-color: #fff #85827a #85827a #fff; pointer-events: none; }
.combo::after { content: ""; position: absolute; right: 3px; top: 5px; border: solid transparent; border-width: 3px 3px 0; border-top-color: #000; pointer-events: none; }
.combo.off { background: #ece9d8; border-color: #aca899 #fff #fff #aca899; color: #aca899; }
.combo.off::after { border-top-color: #aca899; }
.combo select:disabled { opacity: 1; color: #aca899; }
.scale { width: 101px; margin-left: 3px; }
.zoom { width: 40px; }
.layout { width: 270px; }
.layout .t { width: 16px; flex: 1 1 auto; }
.tools { width: 275px; padding: 0 8px 0 3px; border-left-color: #c5c2b3; }
.tools .t { flex: 1; }
.editor { flex: 1; min-width: 0; border-right: 0; padding-left: 2px; border-left-color: #c5c2b3; overflow: hidden; }
.editor .gray { margin: 0 3px 0 6px; }
.editor .text { padding-right: 7px; }
.task { flex: 1 0 75px; }
.task::before, .task::after { display: none; }
.task select { padding: 0 0 0 1px; }
.rast { width: 120px; margin-left: 4px; }
.raster .gray { width: 26px; }
.raster { padding-left: 6px; }
.vec, .clean { margin-right: 5px; }

/* main area */
main { flex: 1; min-height: 0; display: flex; }
aside { width: 162px; flex: none; display: flex; flex-direction: column; padding: 0 4px 3px 5px; border-right: 1px solid #85827a; border-top: 1px solid #aca899; }
.dock { height: 14px; display: flex; align-items: center; gap: 3px; }
.dock span { flex: 1; height: 5px; border: solid #c5c2b3; border-width: 1px 0; box-shadow: 0 1px #fff, inset 0 1px #fff; }
.dock button { width: 7px; font: bold 9px/9px "DejaVu Sans", sans-serif; }
.toc { flex: 1; min-height: 0; display: flex; flex-direction: column; background: #fff; border: 1px solid; border-color: #716f64 #c5c2b3 #716f64 #716f64; }
.tree { flex: 1; overflow: hidden; white-space: nowrap; }
.tree li { height: 11px; display: flex; align-items: center; }
.tree .ti { width: 12px; height: 10px; margin: 0 1px 0 4px; flex: none; }
.tree strong { background: #316ac5; color: #fff; padding: 0 1px; }
.l0 { padding-left: 3px; }
.l1 { padding-left: 16px; }
.l2 { padding-left: 29px; }
.exp { width: 7px; height: 7px; flex: none; border: 1px solid #b9b6aa; background: linear-gradient(#000, #000) center / 3px 1px no-repeat #fff; }
.tree input { appearance: none; width: 9px; height: 9px; flex: none; margin: 0 5px 0 4px; border: 1px solid #333; background: #fff; display: grid; place-items: center; }
.tree input:checked::after { content: ""; width: 5px; height: 3px; border: solid #000; border-width: 0 0 2px 2px; rotate: -45deg; margin-top: -2px; }
.sym { padding-left: 56px; }
.diamond { width: 3px; height: 3px; background: #8b0000; border: 1px solid #600; rotate: 45deg; }
.val { padding-left: 66px; }
.tree .ramp { height: 32px; padding-left: 53px; gap: 2px; align-items: stretch; }
.ramp i { width: 10px; margin-top: 1px; background: linear-gradient(#ff2000, #ff8c00 20%, #ffee40 38%, #b8f8c0 52%, #30d8ff 65%, #2870ff 82%, #1010ff); }
.ramp p { display: flex; flex-direction: column; justify-content: space-between; }
.hxp { height: 12px; display: flex; align-items: center; background: #f3f1e9; }
.hxp button { width: 11px; height: 11px; border-radius: 2px; background: #c6d6fd; display: grid; place-items: center; }
.hxp svg { width: 6px; height: 6px; }
.hxp i { width: 74px; height: 11px; margin: 0 auto 0 1px; border: 1px solid #9fb5e8; border-radius: 2px; background: repeating-linear-gradient(90deg, #eef4fe 0 1px, #a3bbf0 1px 2px) center / 6px 4px no-repeat #c6d6fd; }
.tabs { height: 15px; display: flex; align-items: flex-start; }
.tabs button { height: 12px; padding: 0 2px; border: 1px solid; border-color: transparent #716f64 #aca899 #fff; }
.tabs .cur { height: 15px; padding: 2px 2px 0; border-bottom-color: #716f64; }

.view { flex: 1; min-width: 0; display: flex; flex-direction: column; background: #fff; border: solid #716f64; border-width: 1px 0 0 1px; margin-right: 1px; }
.upper { flex: 1; min-height: 0; display: flex; }
.map { flex: 1; min-width: 0; height: 100%; display: block; }
.vs { width: 12px; display: flex; flex-direction: column; background: #f5f3ea; }
.vs button, .strip > button { width: 11px; height: 12px; flex: none; display: grid; place-items: center; background: #ece9d8; border: 1px solid; border-color: #fff #716f64 #716f64 #fff; }
.vs i { flex: 1; margin-bottom: 8px; background: #ece9d8; border: 1px solid; border-color: #fff #85827a #85827a #fff; }
.strip { height: 13px; display: flex; align-items: center; }
.strip > i { flex: 1; height: 12px; background: #ece9d8; border: 1px solid; border-color: #fff #85827a #85827a #fff; }
.strip em { width: 12px; }
.pages { width: 441px; flex: none; display: flex; height: 12px; }
.pair, .extra { flex: 1; display: flex; align-items: center; }
.extra { flex: 0 0 21px; gap: 4px; }
.pair .data { width: 10px; height: 11px; border: 1px solid; border-color: #aca899 #eee #eee #aca899; background: #f6f5ee; display: grid; place-items: center; }
.pair .data svg { width: 7px; height: 7px; }
.pair .lay { width: 6px; margin-left: 2px; display: grid; }
.pair .lay svg { width: 6px; height: 8px; }
.pair i { width: 1px; height: 8px; margin: 0 auto; background: #c5c2b3; }
.extra svg { width: 8px; height: 8px; display: block; }
.extra b { display: block; width: 4px; height: 4px; border: solid #666; border-width: 0 1px; }

/* drawing bar */
.draw { padding: 0 2px 0 3px; }
.draw .drop { width: 13px; }
.combo.font { width: 117px; margin-left: 3px; }
.combo.size { width: 31px; margin: 0 5px 0 4px; }
.glyph { font: bold 10px/12px "Liberation Serif", serif; }
.glyph.big { font-size: 13px; }
.glyph.it { font-style: italic; }
.glyph.un { text-decoration: underline; }
.glyph.col { font-size: 13px; line-height: 10px; }
.glyph.col::after { content: ""; width: 12px; height: 2px; background: #000; }

footer { flex: none; height: 14px; display: flex; align-items: center; justify-content: flex-end; gap: 1px; }
.cellbox { width: 14px; height: 11px; border: 1px solid; border-color: #aca899 #fff #fff #aca899; }
output { width: 163px; height: 11px; padding-left: 1px; line-height: 10px; border: 1px solid; border-color: #aca899 #fff #fff #aca899; }
footer svg { width: 10px; height: 10px; margin-left: 3px; }
```
